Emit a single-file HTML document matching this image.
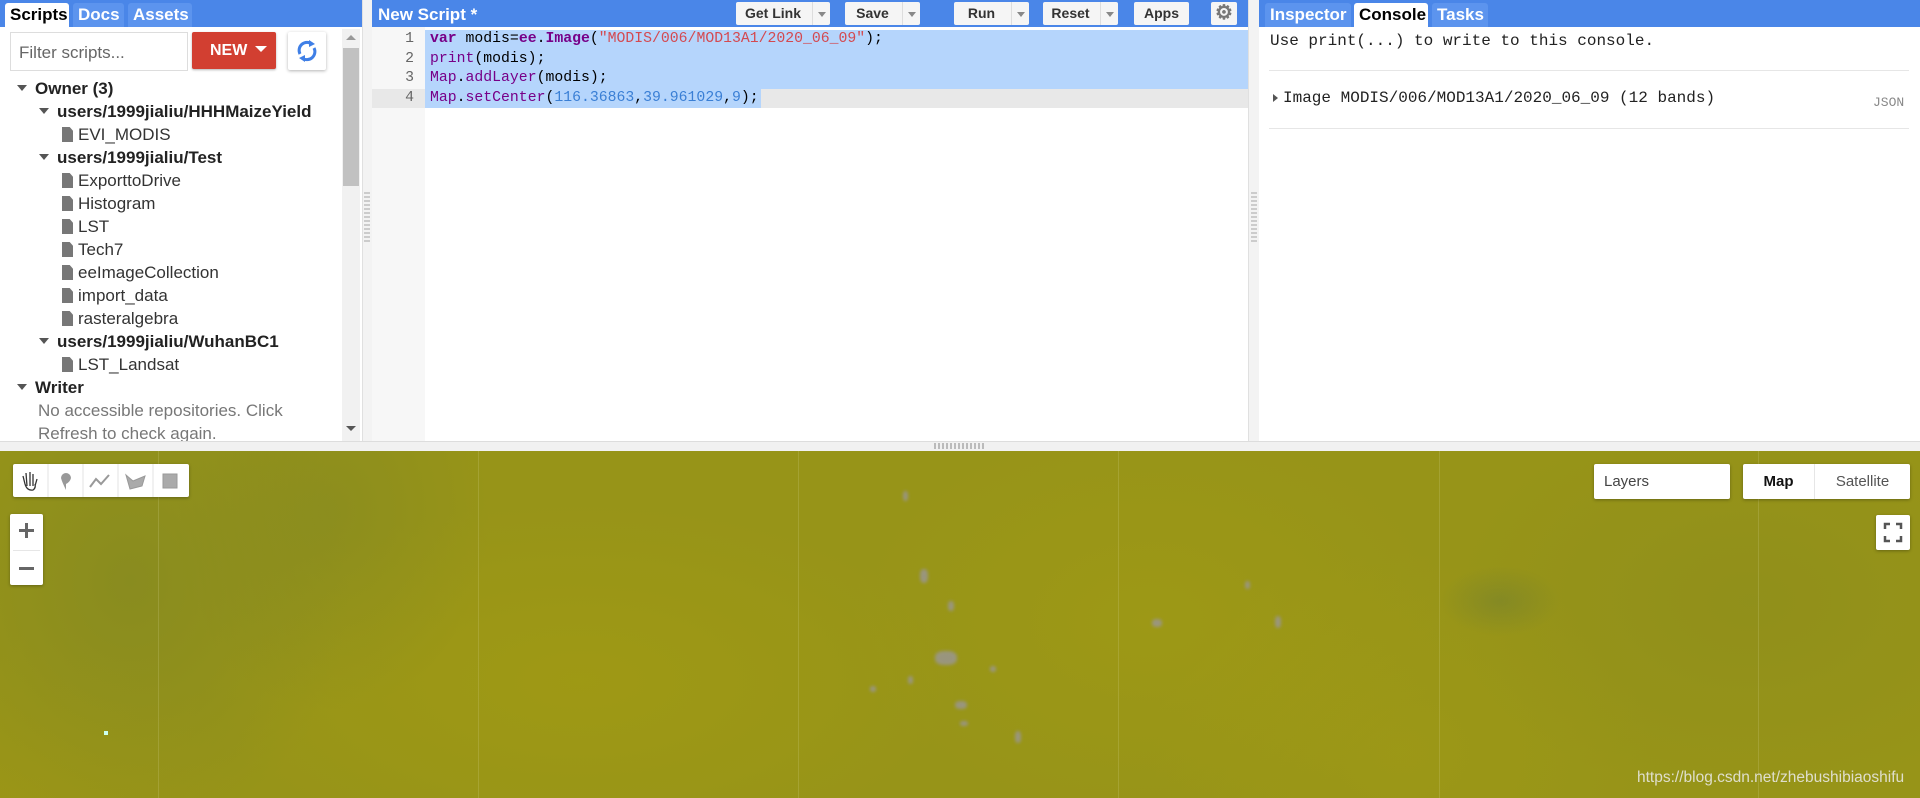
<!DOCTYPE html>
<html><head><meta charset="utf-8"><style>
*{box-sizing:border-box;margin:0;padding:0}
body{width:1920px;height:798px;overflow:hidden;background:#fff;font-family:"Liberation Sans",sans-serif;position:relative}
.abs{position:absolute}
.bar{background:#4a86e8;height:27px}
.tab{position:absolute;top:3px;height:24px;font-weight:bold;font-size:17px;color:#fff;padding:2px 5px 0;border-radius:3px 3px 0 0;background:#5c94ee}
.tab.on{background:#fff;color:#000}
.tree{font-size:17px;color:#333;line-height:23px}
.tree div{position:absolute;white-space:nowrap}
.b{font-weight:bold;color:#222}
.tri{display:inline-block;width:0;height:0;border-left:5px solid transparent;border-right:5px solid transparent;border-top:6px solid #555;margin-right:8px;vertical-align:3px}
.doc{display:inline-block;width:11px;height:15px;background:#777;margin-right:5px;vertical-align:-2px;clip-path:polygon(0 0,70% 0,100% 25%,100% 100%,0 100%)}
.btn{position:absolute;top:2px;height:23px;background:#f5f5f5;border-radius:2px;font-size:14px;font-weight:bold;color:#333;line-height:23px;text-align:center}
.dd{position:absolute;right:0;top:0;width:18px;height:23px;border-left:1px solid #ddd}
.dd:after{content:"";position:absolute;left:5px;top:10px;border-left:4px solid transparent;border-right:4px solid transparent;border-top:5px solid #888}
.code{font-family:"Liberation Mono",monospace;font-size:14.8px;line-height:19.6px;white-space:pre}
.map{top:451px;left:0;width:1920px;height:347px;background:#979418;overflow:hidden}
.vl{position:absolute;top:0;width:1px;height:347px;background:rgba(230,230,170,.18)}
.card{position:absolute;background:#fff;border-radius:2px;box-shadow:0 1px 3px rgba(0,0,0,.3)}
.spot{position:absolute;background:#9a96a0;border-radius:40%;filter:blur(1.5px);opacity:.75}
</style></head><body>
<!-- left panel -->
<div class="abs bar" style="left:0;top:0;width:362px"></div>
<div class="tab on" style="left:5px;width:64px">Scripts</div>
<div class="tab" style="left:73px;width:51px">Docs</div>
<div class="tab" style="left:128px;width:64px">Assets</div>
<div class="abs" style="left:10px;top:32px;width:178px;height:39px;border:1px solid #ddd;font-size:17px;color:#666;padding:10px 0 0 8px">Filter scripts...</div>
<div class="abs" style="left:192px;top:32px;width:84px;height:37px;background:#d23f31;border-radius:2px;color:#fff;font-size:16px;font-weight:bold;padding:10px 0 0 18px;box-shadow:0 1px 2px rgba(0,0,0,.3)">NEW <span style="display:inline-block;border-left:6px solid transparent;border-right:6px solid transparent;border-top:6px solid #fff;vertical-align:3px;margin-left:3px"></span></div>
<div class="abs" style="left:288px;top:32px;width:38px;height:38px;border-radius:2px;box-shadow:0 1px 3px rgba(0,0,0,.3);background:#fff">
<svg width="38" height="38" viewBox="0 0 38 38"><path d="M12 22 A8 8 0 0 1 24 12" fill="none" stroke="#3f7fe6" stroke-width="3"/><path d="M26 16 A8 8 0 0 1 14 26" fill="none" stroke="#3f7fe6" stroke-width="3"/><path d="M21 8 L27 12 L21 15Z" fill="#3f7fe6"/><path d="M17 23 L11 26 L17 30Z" fill="#3f7fe6"/></svg></div>
<div class="abs" style="left:342px;top:29px;width:18px;height:412px;background:#f1f1f1"></div>
<div class="abs" style="left:343px;top:48px;width:16px;height:138px;background:#c1c1c1"></div>
<div class="abs" style="left:346px;top:35px;border-left:5px solid transparent;border-right:5px solid transparent;border-bottom:5px solid #999"></div>
<div class="abs" style="left:346px;top:426px;border-left:5px solid transparent;border-right:5px solid transparent;border-top:5px solid #555"></div>
<div class="tree">
<div class="b" style="left:17px;top:77px"><span class="tri"></span>Owner (3)</div>
<div class="b" style="left:39px;top:100px"><span class="tri"></span>users/1999jialiu/HHHMaizeYield</div>
<div style="left:62px;top:123px"><span class="doc"></span>EVI_MODIS</div>
<div class="b" style="left:39px;top:146px"><span class="tri"></span>users/1999jialiu/Test</div>
<div style="left:62px;top:169px"><span class="doc"></span>ExporttoDrive</div>
<div style="left:62px;top:192px"><span class="doc"></span>Histogram</div>
<div style="left:62px;top:215px"><span class="doc"></span>LST</div>
<div style="left:62px;top:238px"><span class="doc"></span>Tech7</div>
<div style="left:62px;top:261px"><span class="doc"></span>eeImageCollection</div>
<div style="left:62px;top:284px"><span class="doc"></span>import_data</div>
<div style="left:62px;top:307px"><span class="doc"></span>rasteralgebra</div>
<div class="b" style="left:39px;top:330px"><span class="tri"></span>users/1999jialiu/WuhanBC1</div>
<div style="left:62px;top:353px"><span class="doc"></span>LST_Landsat</div>
<div class="b" style="left:17px;top:376px"><span class="tri"></span>Writer</div>
<div style="left:38px;top:399px;color:#777">No accessible repositories. Click</div>
<div style="left:38px;top:422px;color:#777">Refresh to check again.</div>
</div>
<!-- splitters -->
<div class="abs" style="left:362px;top:0;width:10px;height:441px;background:#f3f3f3;border-left:1px solid #e0e0e0"></div>
<div class="abs" style="left:364px;top:192px;width:6px;height:52px;background:repeating-linear-gradient(#ccc 0 2px,transparent 2px 4px)"></div>
<div class="abs" style="left:1248px;top:0;width:11px;height:441px;background:#f3f3f3;border-left:1px solid #e0e0e0"></div>
<div class="abs" style="left:1251px;top:192px;width:6px;height:52px;background:repeating-linear-gradient(#ccc 0 2px,transparent 2px 4px)"></div>
<div class="abs" style="left:0;top:441px;width:1920px;height:10px;background:#f1f1f1;border-top:1px solid #ddd"></div>
<div class="abs" style="left:934px;top:443px;width:52px;height:6px;background:repeating-linear-gradient(90deg,#bbb 0 2px,transparent 2px 4px)"></div>
<!-- editor -->
<div class="abs bar" style="left:372px;top:0;width:876px"></div>
<div class="abs" style="left:378px;top:5px;color:#fff;font-weight:bold;font-size:17px">New Script *</div>
<div class="btn" style="left:736px;width:94px;padding-right:20px">Get Link<span class="dd"></span></div>
<div class="btn" style="left:845px;width:75px;padding-right:20px">Save<span class="dd"></span></div>
<div class="btn" style="left:954px;width:75px;padding-right:20px">Run<span class="dd"></span></div>
<div class="btn" style="left:1043px;width:75px;padding-right:20px">Reset<span class="dd"></span></div>
<div class="btn" style="left:1134px;width:55px">Apps</div>
<div class="btn" style="left:1211px;width:26px;font-size:20px;color:#777">⚙</div>
<div class="abs" style="left:372px;top:27px;width:53px;height:414px;background:#f7f7f7"></div>
<div class="abs" style="left:425px;top:30px;width:823px;height:58.8px;background:#b5d5fc"></div>
<div class="abs" style="left:372px;top:88.8px;width:876px;height:19.6px;background:#e8e8e8"></div>
<div class="abs" style="left:425px;top:88.8px;width:336px;height:19.6px;background:#b5d5fc"></div>
<div class="abs code" style="left:372px;top:30px;width:42px;text-align:right;color:#666">1
2
3
4</div>
<div class="abs code" style="left:430px;top:30px;color:#000"><b style="color:#708">var</b> modis=<b style="color:#708">ee</b>.<b style="color:#708">Image</b>(<span style="color:#d44950">"MODIS/006/MOD13A1/2020_06_09"</span>);
<span style="color:#708">print</span>(modis);
<span style="color:#708">Map</span>.<span style="color:#708">addLayer</span>(modis);
<span style="color:#708">Map</span>.<span style="color:#708">setCenter</span>(<span style="color:#3a7fd5">116.36863</span>,<span style="color:#3a7fd5">39.961029</span>,<span style="color:#3a7fd5">9</span>);</div>
<!-- console -->
<div class="abs bar" style="left:1259px;top:0;width:661px"></div>
<div class="tab" style="left:1265px;width:86px">Inspector</div>
<div class="tab on" style="left:1354px;width:74px">Console</div>
<div class="tab" style="left:1432px;width:56px">Tasks</div>
<div class="abs code" style="left:1270px;top:32px;font-size:16px;color:#222">Use print(...) to write to this console.</div>
<div class="abs" style="left:1269px;top:70px;width:640px;height:1px;background:#e6e6e6"></div>
<div class="abs" style="left:1273px;top:94px;border-top:4px solid transparent;border-bottom:4px solid transparent;border-left:5px solid #555"></div>
<div class="abs code" style="left:1283px;top:89px;font-size:16px;color:#222">Image MODIS/006/MOD13A1/2020_06_09 (12 bands)</div>
<div class="abs code" style="left:1873px;top:93px;font-size:13px;color:#888">JSON</div>
<div class="abs" style="left:1269px;top:128px;width:640px;height:1px;background:#e6e6e6"></div>
<!-- map -->
<div class="abs map">
<div class="abs" style="inset:0;background:
radial-gradient(ellipse 220px 260px at 130px 130px,rgba(120,130,40,.45),transparent),
radial-gradient(ellipse 160px 200px at 330px 60px,rgba(120,130,40,.35),transparent),
radial-gradient(ellipse 380px 180px at 580px 230px,rgba(170,160,15,.4),transparent),
radial-gradient(ellipse 300px 200px at 1150px 170px,rgba(168,160,18,.35),transparent),
radial-gradient(ellipse 60px 35px at 1500px 150px,rgba(110,125,50,.45),transparent),
radial-gradient(ellipse 300px 200px at 1750px 150px,rgba(125,130,35,.25),transparent),
radial-gradient(ellipse 250px 200px at 1400px 300px,rgba(165,158,20,.35),transparent),
radial-gradient(ellipse 200px 150px at 40px 330px,rgba(160,152,20,.4),transparent)"></div>
<div class="vl" style="left:158px"></div><div class="vl" style="left:478px"></div><div class="vl" style="left:798px"></div><div class="vl" style="left:1118px"></div><div class="vl" style="left:1439px"></div><div class="vl" style="left:1758px"></div>
<div class="spot" style="left:903px;top:40px;width:5px;height:10px"></div>
<div class="spot" style="left:920px;top:118px;width:8px;height:14px"></div>
<div class="spot" style="left:935px;top:200px;width:22px;height:14px"></div>
<div class="spot" style="left:948px;top:150px;width:6px;height:10px"></div>
<div class="spot" style="left:955px;top:250px;width:12px;height:8px"></div>
<div class="spot" style="left:908px;top:225px;width:5px;height:8px"></div>
<div class="spot" style="left:870px;top:235px;width:6px;height:6px"></div>
<div class="spot" style="left:1015px;top:280px;width:6px;height:12px"></div>
<div class="spot" style="left:1245px;top:130px;width:5px;height:8px"></div>
<div class="spot" style="left:1275px;top:165px;width:6px;height:12px"></div>
<div class="spot" style="left:1152px;top:168px;width:10px;height:8px"></div>
<div class="spot" style="left:960px;top:270px;width:8px;height:5px"></div>
<div class="spot" style="left:990px;top:215px;width:6px;height:6px"></div>
<div class="card" style="left:13px;top:13px;width:176px;height:33px"></div>
<svg class="abs" style="left:13px;top:13px" width="176" height="33" viewBox="0 0 176 33">
<g stroke="#e3e3e3"><line x1="35" y1="0" x2="35" y2="33"/><line x1="70" y1="0" x2="70" y2="33"/><line x1="105" y1="0" x2="105" y2="33"/><line x1="140" y1="0" x2="140" y2="33"/></g>
<path d="M12 20 L10 12 M14 22 L13 9 M17 22 L17 8 M20 22 L20 10 M22 22 L24 15 M12 20 Q14 27 20 26 Q23 24 22 20" fill="none" stroke="#333" stroke-width="1.3"/>
<path d="M48 14 A5 5 0 1 1 58 14 Q57 18 53 20 L53 26 Q49 18 48 14Z" fill="#999"/>
<path d="M77 23 L83 15 L88 20 L96 11" fill="none" stroke="#999" stroke-width="2"/>
<path d="M113 11 L120 17 L132 12 L129 22 L117 25Z" fill="#aaa" stroke="#999"/>
<rect x="150" y="10" width="14" height="14" fill="#aaa" stroke="#999"/>
</svg>
<div class="card" style="left:10px;top:63px;width:33px;height:71px"></div>
<div class="abs" style="left:13px;top:99px;width:27px;height:1px;background:#e6e6e6"></div>
<div class="abs" style="left:19px;top:78px;width:15px;height:3px;background:#666"></div>
<div class="abs" style="left:25px;top:72px;width:3px;height:15px;background:#666"></div>
<div class="abs" style="left:19px;top:116px;width:15px;height:3px;background:#666"></div>
<div class="card" style="left:1594px;top:13px;width:136px;height:35px;font-size:15px;color:#444;padding:9px 0 0 10px">Layers</div>
<div class="card" style="left:1743px;top:13px;width:167px;height:35px;font-size:15px">
<div class="abs" style="left:0;top:0;width:72px;height:35px;border-right:1px solid #e6e6e6;font-weight:bold;color:#111;text-align:center;line-height:35px">Map</div>
<div class="abs" style="left:72px;top:0;width:95px;height:35px;color:#555;text-align:center;line-height:35px">Satellite</div></div>
<div class="card" style="left:1876px;top:64px;width:34px;height:35px"></div>
<svg class="abs" style="left:1876px;top:64px" width="34" height="35"><path d="M9 14 V9 H14 M20 9 H25 V14 M25 21 V26 H20 M14 26 H9 V21" fill="none" stroke="#555" stroke-width="2.5"/></svg>
<div class="abs" style="left:104px;top:280px;width:4px;height:4px;background:#cfe"></div>
<div class="abs" style="left:1637px;top:318px;font-size:15.5px;color:rgba(235,235,235,.85)">https://blog.csdn.net/zhebushibiaoshifu</div>
</div>
</body></html>
